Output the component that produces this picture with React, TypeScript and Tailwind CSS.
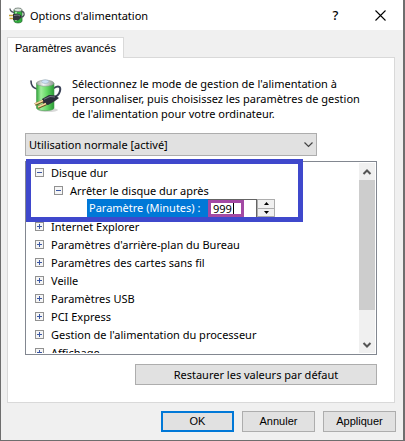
import { useState } from 'react'

interface Setting {
    label: string;
}

const settings: Setting[] = [
    { label: 'Internet Explorer' },
    { label: "Paramètres d'arrière-plan du Bureau" },
    { label: 'Paramètres des cartes sans fil' },
    { label: 'Veille' },
    { label: 'Paramètres USB' },
    { label: 'PCI Express' },
    { label: "Gestion de l'alimentation du processeur" },
    { label: 'Affichage' },
];

const SmallPowerIcon = () => (
    <svg viewBox="0 0 16 17" className="h-[17px] w-[16px]" aria-hidden="true">
        <path d="M5 3 V14 C5 16.500 13 16.500 13 14 V3 Z" fill="#2fb03c" stroke="#2b6b33" strokeWidth="0.800" />
        <path d="M7 5 V14" stroke="#9df09a" strokeWidth="2" />
        <ellipse cx="9" cy="2.800" rx="4" ry="1.800" fill="#dfe8e2" stroke="#66746b" strokeWidth="0.800" />
        <path d="M1 1.500 C1 4 3 5 5 5.500" fill="none" stroke="#4a4f58" strokeWidth="1.200" />
        <path d="M12 10 C15.500 10 15.500 7 14.500 5 L12.500 4.500" fill="none" stroke="#4a4f58" strokeWidth="1.300" />
        <path d="M4 7 L8 6.500 L12 8 V11 L9 13.500 L4 13 Z" fill="#33363c" />
        <path d="M5 8.500 L9 8 L11 9" fill="none" stroke="#8b9097" strokeWidth="0.800" />
        <path d="M0 8.500 H4 M0.500 11.500 H4" stroke="#c9a336" strokeWidth="1.600" />
    </svg>
)

const PowerIcon = ({ className }: { className: string }) => (
    <svg viewBox="0 0 32 34" className={className} aria-hidden="true">
        <defs>
            <linearGradient id="cell" x1="0" x2="1" y1="0" y2="0">
                <stop offset="0" stopColor="#2fa53a" />
                <stop offset="0.25" stopColor="#a0ec9b" />
                <stop offset="0.6" stopColor="#62d863" />
                <stop offset="1" stopColor="#2a9a37" />
            </linearGradient>
            <linearGradient id="cap" x1="0" x2="1" y1="0" y2="0">
                <stop offset="0" stopColor="#98a39c" />
                <stop offset="0.4" stopColor="#f4f7f8" />
                <stop offset="1" stopColor="#8d9892" />
            </linearGradient>
        </defs>
        <ellipse cx="18" cy="31" rx="10" ry="2" fill="#000" opacity="0.15" />
        <path d="M1 2 C1 7 3 9 7 10" fill="none" stroke="#3b4257" strokeWidth="1.600" strokeLinecap="round" />
        <path d="M24 9 C29 6 31 8 30 12 C29 16 27 17 23 19" fill="none" stroke="#3b4257" strokeWidth="2" strokeLinecap="round" />
        <path d="M6.500 4 V29 C6.500 32.500 24 32.500 24 29 V4 Z" fill="url(#cell)" stroke="#4b9a52" strokeWidth="0.600" />
        <ellipse cx="15.200" cy="4.200" rx="8.700" ry="3" fill="url(#cap)" stroke="#8a968e" strokeWidth="0.600" />
        <ellipse cx="15.200" cy="2.600" rx="3.600" ry="1.800" fill="#cfe3f6" stroke="#8aa0b5" strokeWidth="0.500" />
        <path d="M12 20 L19 16 L25 16.500 L29 19 L25 22 L18 26 L13 25 Z" fill="#2b2d3a" />
        <path d="M14 20.300 L20 17.500 L25 18" fill="none" stroke="#7b7f8c" strokeWidth="0.900" />
        <path d="M13 22 L5 25.500 M16 25 L8 28.500" stroke="#70501f" strokeWidth="3" />
        <path d="M13 21.500 L5 25 M16 24.500 L8 28" stroke="#f3d9a0" strokeWidth="1.600" />
    </svg>
)

const Expander = ({ open }: { open: boolean }) => (
    <svg viewBox="0 0 9 9" className="mt-px h-[9px] w-[9px] shrink-0" shapeRendering="crispEdges" aria-hidden="true">
        <rect x="0.5" y="0.5" width="8" height="8" fill="#f5f5f5" stroke="#919191" />
        <path d="M2 4.500 H7" stroke="#3b57a3" />
        {!open && <path d="M4.500 2 V7" stroke="#3b57a3" />}
    </svg>
)

const Arrow = ({ up }: { up: boolean }) => (
    <svg viewBox="0 0 10 10" className="h-[10px] w-[10px]" aria-hidden="true">
        <path d={up ? 'M1.500 7 L5 3.500 L8.500 7' : 'M1.500 3 L5 6.500 L8.500 3'} fill="none" stroke="#555" strokeWidth="2" />
    </svg>
)

const App = () => {

    const [minutes, setMinutes] = useState('999');
    const [diskOpen, setDiskOpen] = useState(true);

    return (
        <div className="border-b border-l border-r-2 border-[#6e6e6e] bg-[#f0f0f0] font-['Noto_Sans',sans-serif] text-[11px] leading-[15px] text-black">
            <header className="flex h-[30px] items-center bg-white pl-2">
                <SmallPowerIcon />
                <h1 className="ml-[5px] flex-1">Options d'alimentation</h1>
                <button aria-label="Aide" className="w-[45px] text-center text-[13px] font-medium">?</button>
                <button aria-label="Fermer" className="flex w-[45px] justify-center">
                    <svg viewBox="0 0 11 11" className="h-[11px] w-[11px]" aria-hidden="true">
                        <path d="M0.500 0.500 L10.500 10.500 M10.500 0.500 L0.500 10.500" stroke="#000" strokeWidth="1.100" />
                    </svg>
                </button>
            </header>

            <main className="pt-[7px] pr-[7px] pl-[6px]">
                <div role="tablist" className="flex">
                    <button role="tab" aria-selected="true" className="relative z-10 -mb-px h-[21px] border border-b-0 border-[#d9d9d9] bg-white px-[7px] font-['Liberation_Sans',sans-serif]">
                        Paramètres avancés
                    </button>
                </div>

                <section className="mr-px border border-[#d9d9d9] bg-white px-[17px] pt-[18px] pb-[17px]">
                    <div className="flex pl-[5px]">
                        <PowerIcon className="mt-[3px] h-[34px] w-[32px] shrink-0" />
                        <p className="ml-[10px] whitespace-nowrap">
                            Sélectionnez le mode de gestion de l'alimentation à<br />
                            personnaliser, puis choisissez les paramètres de gestion<br />
                            de l'alimentation pour votre ordinateur.
                        </p>
                    </div>

                    <div className="relative mt-[12px] mr-[60px]">
                        <select aria-label="Mode de gestion" className="h-[23px] w-full appearance-none border border-[#adadad] bg-[#e1e1e1] px-[3px]">
                            <option>Utilisation normale [activé]</option>
                        </select>
                        <svg viewBox="0 0 9 6" className="pointer-events-none absolute top-[9px] right-1 h-[6px] w-[9px]" aria-hidden="true">
                            <path d="M0.500 0.500 L4.500 4.500 L8.500 0.500" fill="none" stroke="#444" strokeWidth="1.200" />
                        </svg>
                    </div>

                    <div className="relative mt-[5px]">
                        <div className="flex h-[194px] border border-[#828790] p-px">
                            <ul className="flex-1 overflow-hidden pl-2">
                                <li>
                                    <button className="flex h-[18px] items-center gap-[7px]" onClick={() => setDiskOpen(!diskOpen)}>
                                        <Expander open={diskOpen} />
                                        Disque dur
                                    </button>
                                    {diskOpen && (
                                        <div className="pl-[19px]">
                                            <div className="flex h-[18px] items-center gap-[7px]">
                                                <Expander open />
                                                Arrêter le disque dur après
                                            </div>
                                            <div className="flex h-[18px] pl-[33px]">
                                                <label htmlFor="minutes" className="w-[121px] bg-[#0078d7] pl-[2px] leading-[18px] whitespace-nowrap text-white">
                                                    Paramètre (Minutes) :
                                                </label>
                                                <div className="flex w-[49px] border-t border-r border-[#646464]">
                                                    <div className="flex w-[36px] border-[3px] border-[#a349a4]">
                                                        <input
                                                            id="minutes"
                                                            className="w-[22px] pl-[2px] leading-[11px] caret-transparent outline-none"
                                                            value={minutes}
                                                            onChange={(e) => setMinutes(e.target.value)}
                                                        />
                                                        <span className="w-px bg-black" />
                                                    </div>
                                                </div>
                                                <div className="flex w-[18px] flex-col border border-[#adadad] bg-[#f0f0f0]">
                                                    <button aria-label="Augmenter" className="flex flex-1 items-center justify-center border-b border-[#adadad]" onClick={() => setMinutes(String(Number(minutes) + 1))}>
                                                        <svg viewBox="0 0 5 3" className="h-[3px] w-[5px]"><path d="M0 3 L2.500 0 L5 3 Z" /></svg>
                                                    </button>
                                                    <button aria-label="Diminuer" className="flex flex-1 items-center justify-center" onClick={() => setMinutes(String(Number(minutes) - 1))}>
                                                        <svg viewBox="0 0 5 3" className="h-[3px] w-[5px]"><path d="M0 0 L2.500 3 L5 0 Z" /></svg>
                                                    </button>
                                                </div>
                                            </div>
                                        </div>
                                    )}
                                </li>
                                {settings.map((s) => (
                                    <li key={s.label} className="flex h-[18px] items-center gap-[7px] whitespace-nowrap">
                                        <Expander open={false} />
                                        {s.label}
                                    </li>
                                ))}
                            </ul>
                            <div className="flex w-[16px] flex-col items-center bg-[#f0f0f0]">
                                <div className="flex h-[17px] items-center"><Arrow up /></div>
                                <div className="w-full flex-1 bg-[#cdcdcd]" />
                                <div className="flex h-[43px] items-end pb-[3px]"><Arrow up={false} /></div>
                            </div>
                        </div>
                        <div className="pointer-events-none absolute -top-[2px] left-px h-[63px] w-[277px] border-[5px] border-[#3f48cc]" />
                    </div>

                    <div className="mt-[9px] flex justify-end">
                        <button className="h-[21px] w-[242px] border border-[#adadad] bg-[#e1e1e1]">Restaurer les valeurs par défaut</button>
                    </div>
                </section>

                <footer className="flex justify-end gap-2 py-2 font-['Liberation_Sans',sans-serif]">
                    <button className="h-[21px] w-[73px] border-2 border-[#0078d7] bg-[#e1e1e1]">OK</button>
                    <button className="h-[21px] w-[73px] border border-[#adadad] bg-[#e1e1e1]">Annuler</button>
                    <button className="h-[21px] w-[73px] border border-[#adadad] bg-[#e1e1e1]">Appliquer</button>
                </footer>
            </main>
        </div>
    )
}

export default App
